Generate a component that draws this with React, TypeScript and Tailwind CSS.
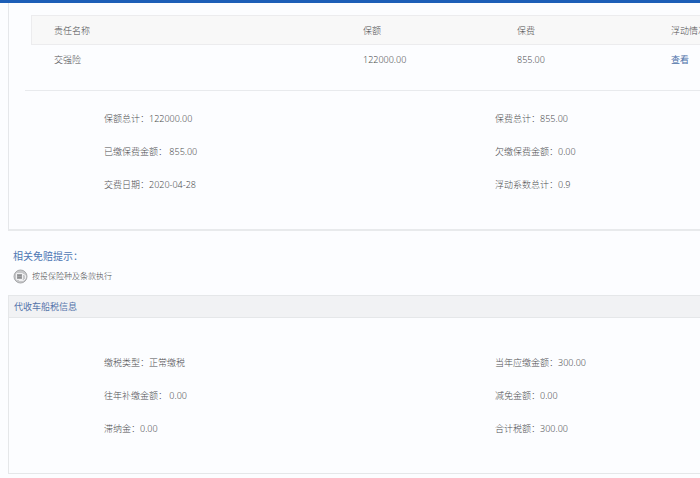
type Item = { label: string; value: string };

const coverage: Item[] = [
  { label: '保额总计：', value: '122000.00' },
  { label: '保费总计：', value: '855.00' },
  { label: '已缴保费金额：', value: ' 855.00' },
  { label: '欠缴保费金额：', value: '0.00' },
  { label: '交费日期：', value: '2020-04-28' },
  { label: '浮动系数总计：', value: '0.9' },
];

const tax: Item[] = [
  { label: '缴税类型：', value: '正常缴税' },
  { label: '当年应缴金额：', value: '300.00' },
  { label: '往年补缴金额：', value: ' 0.00' },
  { label: '减免金额：', value: '0.00' },
  { label: '滞纳金：', value: '0.00' },
  { label: '合计税额：', value: '300.00' },
];

function InfoGrid({ items }: { items: Item[] }) {
  return (
    <dl className="grid grid-cols-[391px_1fr] pl-[95px]">
      {items.map((item) => (
        <div key={item.label} className="flex h-[33px] items-center whitespace-pre">
          <dt>{item.label}</dt>
          <dd>{item.value}</dd>
        </div>
      ))}
    </dl>
  );
}

function NoticeIcon() {
  return (
    <svg width="16" height="16" viewBox="0 0 16 16" aria-hidden="true">
      <circle cx="7.5" cy="8.5" r="6.5" fill="#c6c7c9" stroke="#a9aaac" strokeWidth="1" />
      <path d="M3.5 5.5h6v6h-6z" fill="#a2a3a5" stroke="#f0f0f2" strokeWidth="1" />
      <path d="M4.5 7.5h4M4.5 9.5h4" stroke="#8c8d8f" strokeWidth="1" />
      <path d="M9.5 6l3 1.5v3l-2 2H6" fill="none" stroke="#f0f0f2" strokeWidth="1" />
    </svg>
  );
}

export default function App() {
  return (
    <div className="min-h-screen overflow-hidden bg-[#fcfdff] font-['Noto_Sans','Noto_Sans_CJK_SC',sans-serif] text-[9px] leading-3 font-light text-[#4c4d4f]">
      <div className="h-[3px] bg-[#1c5eb7]" />
      <main className="min-w-[830px] pl-2">
        <section className="border-b-2 border-l border-b-[#e8eaec] border-l-[#e5e7ea] pt-3 pb-7">
          <div className="ml-4 border-b border-[#e8eaed] pr-4 pb-4 pl-[6px]">
            <table className="w-full table-fixed border-separate border-spacing-0 text-left">
              <colgroup>
                <col className="w-[332px]" />
                <col className="w-[154px]" />
                <col className="w-[154px]" />
                <col />
              </colgroup>
              <thead>
                <tr className="h-[30px] bg-[#f8f8f8]">
                  <th className="border-y border-l border-[#ececee] pt-[2px] pl-[22px] font-light">责任名称</th>
                  <th className="border-y border-[#ececee] pt-[2px] font-light">保额</th>
                  <th className="border-y border-[#ececee] pt-[2px] font-light">保费</th>
                  <th className="border-y border-[#ececee] pt-[2px] font-light">浮动情况</th>
                </tr>
              </thead>
              <tbody>
                <tr className="h-[29px]">
                  <td className="pl-[23px]">交强险</td>
                  <td>122000.00</td>
                  <td>855.00</td>
                  <td>
                    <a href="#view" className="font-normal text-[#4a6fa8]">查看</a>
                  </td>
                </tr>
              </tbody>
            </table>
          </div>
          <div className="pt-[11px]">
            <InfoGrid items={coverage} />
          </div>
        </section>

        <section className="pt-[17px] pb-[11px] pl-[5px]">
          <h2 className="text-[10px] leading-4 font-normal text-[#4f78b4]">相关免赔提示：</h2>
          <div className="mt-1 flex h-4 items-center gap-[3px] text-[8px]">
            <NoticeIcon />
            <p>按投保险种及条款执行</p>
          </div>
        </section>

        <section className="border border-[#e5e7e9]">
          <h2 className="h-[22px] border-b border-[#e5e7e9] bg-[#f1f2f4] pl-[5px] leading-[21px] font-normal text-[#5474aa]">
            代收车船税信息
          </h2>
          <div className="pt-7 pb-7">
            <InfoGrid items={tax} />
          </div>
        </section>
      </main>
    </div>
  );
}
